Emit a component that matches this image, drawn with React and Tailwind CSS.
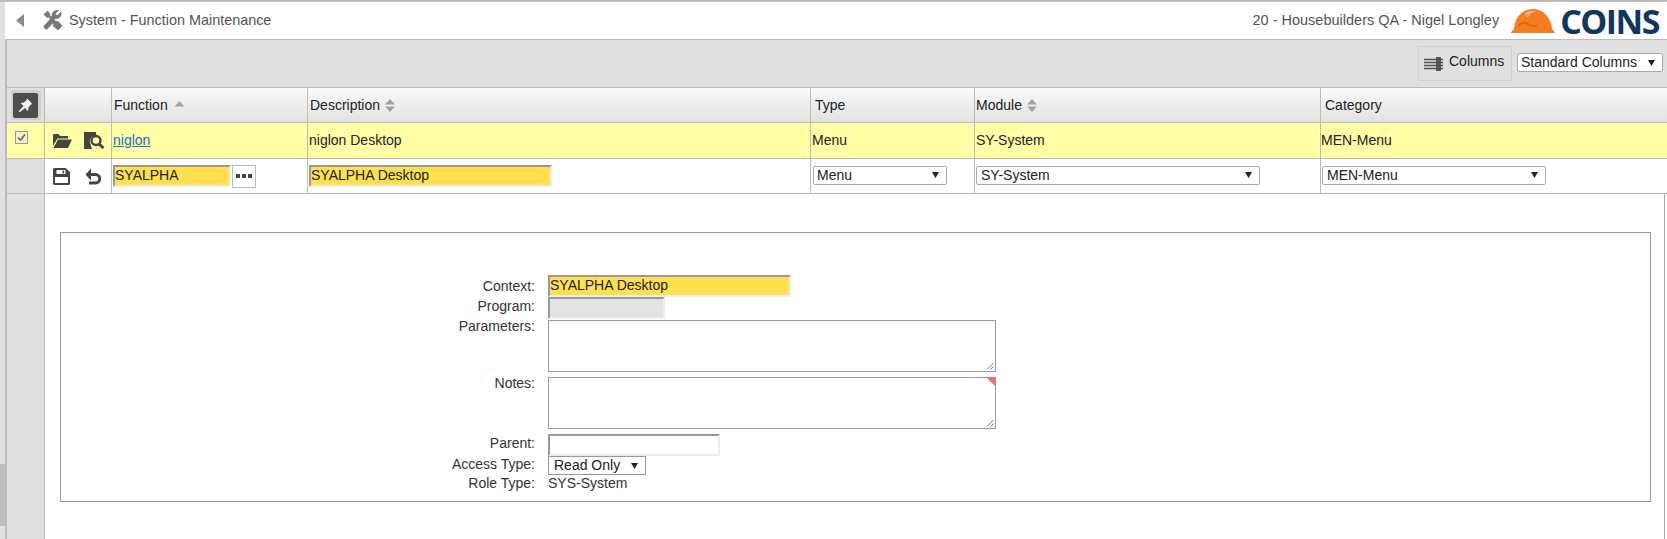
import React from "react";

const FONT = "font-['Liberation_Sans',Arial,sans-serif]";

const Caret = ({ className = "" }) => (
  <svg width="7" height="6" viewBox="0 0 7 6" className={className}>
    <path d="M0 0h7L3.500 6z" fill="#222" />
  </svg>
);

const SortBoth = () => (
  <svg width="10" height="13" viewBox="0 0 10 13" className="ml-[5px]">
    <path d="M5 0l5 5.500H0zM5 13L0 7.500h10z" fill="#a3a3a3" />
  </svg>
);

const SortUp = () => (
  <svg width="11" height="6" viewBox="0 0 11 6" className="ml-[6px] mb-[2px]">
    <path d="M5.500 0l5 5.500H.5z" fill="#a3a3a3" />
  </svg>
);

const FakeSelect = ({ text, className = "" }) => (
  <div
    className={`h-[19px] flex items-center justify-between bg-white border border-[#aaa] rounded-[2px] pr-[7px] text-[14px] text-[#222] ${className}`}
  >
    <span>{text}</span>
    <Caret />
  </div>
);

const Inset = ({ bg = "bg-white", className = "", children }) => (
  <div
    className={`h-[22px] border-2 border-t-[#999] border-l-[#999] border-r-[#eee] border-b-[#eee] text-[14px] leading-[17px] text-[#222] whitespace-nowrap overflow-hidden ${bg} ${className}`}
  >
    {children}
  </div>
);

const Label = ({ children, className = "" }) => (
  <div className={`w-[115px] text-right text-[14px] leading-[15px] text-[#333] ${className}`}>
    {children}
  </div>
);

const Resize = () => (
  <svg width="8" height="8" viewBox="0 0 8 8" className="absolute right-[1px] bottom-[1px]">
    <path d="M1 7.500L7.500 1M4.500 7.500L7.500 4.500" stroke="#777" strokeWidth="1" fill="none" />
  </svg>
);

const ToolsIcon = () => (
  <svg width="20" height="20" viewBox="0 0 20 20" fill="#777" stroke="#777" strokeWidth="0.8">
    <path d="M4.500 1L1 4.500l3 3 1.500-.5 2 2-6 6.500a1.800 1.800 0 000 2.500l.6.6a1.800 1.800 0 002.500 0l5-5.600 1.200 1.200-.7 1.300 4 4a1 1 0 001.400 0l3-3a1 1 0 000-1.400l-4-4-1.300.7-2-2 1.300-1.300a4.800 4.800 0 005.300-6.300L14.500 5.500 12.700 5l-.5-1.800L15.500.7a4.800 4.800 0 00-6.300 5.300L8.300 7 6.500 5.300 7 4z" />
  </svg>
);

const PinIcon = () => (
  <svg width="17" height="17" viewBox="0 0 17 17" fill="#f4f4f4">
    <path d="M10 1.500l5.500 5.500-1.500.5-2.500 3-.5 3.500-3-3L3 15l-1 0 0-1 4.500-5-3-3L7 5.500l2.500-2.500z" />
  </svg>
);

const FolderIcon = () => (
  <svg width="19" height="14" viewBox="0 0 19 14" fill="#444">
    <path d="M0 1a1 1 0 011-1h4.500l1.500 2h7a1 1 0 011 1v1.500H4.500L0 11.500z" />
    <path d="M5 5.500h14l-4 8.500H.5z" />
  </svg>
);

const SearchPageIcon = () => (
  <svg width="21" height="17" viewBox="0 0 21 17">
    <path d="M0 0h12v3a6.500 6.500 0 00-5.500 9.500L8 17H0z" fill="#444" />
    <circle cx="12" cy="8.500" r="4.500" fill="none" stroke="#444" strokeWidth="2.400" />
    <path d="M15 12l4.500 4" stroke="#444" strokeWidth="3" />
  </svg>
);

const SaveIcon = () => (
  <svg width="17" height="17" viewBox="0 0 17 17">
    <path d="M1.500 0h11L17 4v11.500a1.500 1.500 0 01-1.500 1.500h-14A1.500 1.500 0 010 15.500v-14A1.500 1.500 0 011.500 0z" fill="#444" />
    <rect x="3.500" y="2" width="9" height="4" fill="#fff" />
    <rect x="2" y="9" width="13" height="6" fill="#fff" />
    <rect x="9.500" y="2.600" width="1.600" height="2.800" fill="#444" />
  </svg>
);

const UndoIcon = () => (
  <svg width="17" height="17" viewBox="0 0 17 17" fill="none" stroke="#444" strokeWidth="3">
    <path d="M4 6.500h6.500a4 4 0 010 8.500H4" />
    <path d="M6 0.500L0.500 6.500 6 12.500z" fill="#444" stroke="none" />
  </svg>
);

const ColumnsIcon = () => (
  <svg width="19" height="14" viewBox="0 0 19 14">
    <path d="M0 2.500h19M0 5.500h19M0 8.500h19M0 11.500h19" stroke="#555" strokeWidth="1.600" />
    <rect x="12" y="0" width="5" height="14" fill="#555" />
  </svg>
);

// hard hat plus wordmark, the wordmark stays real text
const CoinsLogo = () => (
  <div className="flex items-center mr-[8px]">
    <svg width="44" height="26" viewBox="0 0 44 26">
      <path d="M0 25c.5-2 1.500-3 3-3.500C3.500 10 11 1 22 1s18 9 19 20.500c1.500.5 2.500 1.500 3 3.500z" fill="#f47b20" />
      <path d="M14 5c3-2 7-2.500 11-1.500-3 1-7 2.500-8 6-1.500 0-3-2-3-4.500z" fill="#fbb27a" />
      <path d="M7 18c3-3 7-4 10-2s6 3 9 1" stroke="#d9620e" strokeWidth="1.500" fill="none" />
    </svg>
    <span className="ml-[5px] uppercase font-['Open_Sans',sans-serif] font-bold text-[34px] leading-[36px] tracking-[-1.500px] text-[#12375f]">
      coins
    </span>
  </div>
);

const cols = {
  pin: "w-[38px]",
  act: "w-[67px]",
  fn: "w-[196px]",
  desc: "w-[503px]",
  type: "w-[164px]",
  mod: "w-[346px]",
};

const Row = ({ className = "", first, cells }) => (
  <div className={`flex border-b border-[#bbb] ${className}`}>
    {first}
    {cells}
  </div>
);

export default function App() {
  const cell = "border-r border-[#bbb] flex items-center shrink-0";
  return (
    <div className={`w-[1667px] h-[539px] overflow-hidden bg-white flex border-t-2 border-[#bbb] ${FONT}`}>
      <div className="w-[5px] shrink-0 bg-[#e0e0e0] flex flex-col">
        <div className="mt-[462px] h-[62px] bg-[#bdbdbd]" />
      </div>
      <div className="flex-1 min-w-0 flex flex-col">
        <div className="h-[38px] shrink-0 flex items-center justify-between border-b border-[#bbb] pl-[11px]">
          <div className="flex items-center">
            <svg width="9" height="13" viewBox="0 0 9 13">
              <path d="M8 0v13L0 6.500z" fill="#8a8a8a" />
            </svg>
            <span className="ml-[18px]"><ToolsIcon /></span>
            <span className="ml-[6px] text-[14.4px] text-[#555]">System - Function Maintenance</span>
          </div>
          <div className="flex items-center">
            <span className="text-[14.5px] text-[#555] mr-[12px]">20 - Housebuilders QA - Nigel Longley</span>
            <CoinsLogo />
          </div>
        </div>

        <div className="flex-1 min-h-0 flex flex-col border-l-2 border-[#bbb]">
          <div className="h-[48px] shrink-0 bg-[#e0e0e0] border-b border-[#bbb] flex justify-end items-start pt-[6px] pr-[4px]">
            <div className="h-[35px] w-[94px] flex items-center border border-[#d0d0d0] pl-[5px] text-[14px] text-[#222]">
              <ColumnsIcon />
              <span className="ml-[6px] -mt-[4px]">Columns</span>
            </div>
            <FakeSelect text="Standard Columns" className="w-[146px] ml-[5px] mt-[7px] pl-[3px]" />
          </div>

          <Row
            className="h-[35px] bg-gradient-to-b from-[#fafafa] to-[#e2e2e2] text-[14px] text-[#222]"
            first={
              <div className={`${cols.pin} ${cell} justify-center bg-[#e0e0e0]`}>
                <div className="w-[30px] h-[30px] rounded-[2px] bg-[#d0d0d0] flex items-center justify-center">
                  <div className="w-[25px] h-[25px] rounded-[2px] bg-[#4d4d4d] flex items-center justify-center">
                    <PinIcon />
                  </div>
                </div>
              </div>
            }
            cells={
              <>
                <div className={`${cols.act} ${cell}`} />
                <div className={`${cols.fn} ${cell} pl-[2px]`}>Function<SortUp /></div>
                <div className={`${cols.desc} ${cell} pl-[2px]`}>Description<SortBoth /></div>
                <div className={`${cols.type} ${cell} pl-[4px]`}>Type</div>
                <div className={`${cols.mod} ${cell} pl-[1px]`}>Module<SortBoth /></div>
                <div className="flex items-center pl-[4px]">Category</div>
              </>
            }
          />
          <Row
            className="h-[36px] bg-[#ffffa6] text-[14px] text-[#222]"
            first={
              <div className={`${cols.pin} ${cell} pl-[8px] pb-[6px]`}>
                <div className="w-[13px] h-[13px] border border-[#999] bg-[#f0f0d0] flex items-center justify-center">
                  <svg width="9" height="9" viewBox="0 0 9 9">
                    <path d="M1 4.500l2.500 2.500L8 1.500" stroke="#666" strokeWidth="1.600" fill="none" />
                  </svg>
                </div>
              </div>
            }
            cells={
              <>
                <div className={`${cols.act} ${cell} pl-[8px] gap-[12px]`}>
                  <FolderIcon />
                  <SearchPageIcon />
                </div>
                <div className={`${cols.fn} ${cell} pl-[1px]`}>
                  <a href="#" className="text-[#1a6fc4] underline">niglon</a>
                </div>
                <div className={`${cols.desc} ${cell} pl-[1px]`}>niglon Desktop</div>
                <div className={`${cols.type} ${cell} pl-[1px]`}>Menu</div>
                <div className={`${cols.mod} ${cell} pl-[1px]`}>SY-System</div>
                <div className="flex items-center">MEN-Menu</div>
              </>
            }
          />
          <Row
            className="h-[35px] bg-white"
            first={<div className={`${cols.pin} ${cell} bg-[#e0e0e0]`} />}
            cells={
              <>
                <div className={`${cols.act} ${cell} pl-[8px] gap-[15px]`}>
                  <SaveIcon />
                  <UndoIcon />
                </div>
                <div className={`${cols.fn} ${cell} pl-[1px]`}>
                  <Inset bg="bg-[#ffe04d]" className="w-[118px]">SYALPHA</Inset>
                  <div className="w-[24px] h-[23px] ml-[1px] border border-[#bbb] bg-white flex items-center justify-center gap-[2px]">
                    <span className="w-[4px] h-[4px] bg-[#444]" />
                    <span className="w-[4px] h-[4px] bg-[#444]" />
                    <span className="w-[4px] h-[4px] bg-[#444]" />
                  </div>
                </div>
                <div className={`${cols.desc} ${cell} pl-[1px]`}>
                  <Inset bg="bg-[#ffe04d]" className="w-[243px]">SYALPHA Desktop</Inset>
                </div>
                <div className={`${cols.type} ${cell} pl-[2px]`}>
                  <FakeSelect text="Menu" className="w-[134px] pl-[3px] mb-[2px]" />
                </div>
                <div className={`${cols.mod} ${cell} pl-[1px]`}>
                  <FakeSelect text="SY-System" className="w-[284px] pl-[4px] mb-[2px]" />
                </div>
                <div className="flex items-center pl-[1px]">
                  <FakeSelect text="MEN-Menu" className="w-[224px] pl-[4px] mb-[2px]" />
                </div>
              </>
            }
          />

          <div className="flex-1 flex min-h-0">
            <div className={`${cols.pin} shrink-0 bg-[#e0e0e0] border-r border-[#bbb]`} />
            <div className="flex-1 min-w-0 mr-[2px] border-r border-[#aaa] pt-[38px] pl-[15px] pr-[13px]">
              <div className="h-[270px] border border-[#999] pt-[42px] pl-[359px]">
                <div className="flex items-center h-[22px]">
                  <Label>Context:</Label>
                  <Inset bg="bg-[#ffe04d]" className="ml-[13px] w-[243px]">SYALPHA Desktop</Inset>
                </div>
                <div className="flex items-center h-[22px]">
                  <Label className="-mt-[4px]">Program:</Label>
                  <Inset bg="bg-[#e3e3e3]" className="ml-[13px] w-[117px]" />
                </div>
                <div className="flex items-start mt-[1px]">
                  <Label className="-mt-[1px]">Parameters:</Label>
                  <div className="relative ml-[13px] w-[448px] h-[52px] border border-[#999] bg-white">
                    <Resize />
                  </div>
                </div>
                <div className="flex items-start mt-[5px]">
                  <Label className="-mt-[1px]">Notes:</Label>
                  <div className="relative ml-[13px] w-[448px] h-[52px] border border-[#999] bg-white">
                    <div className="absolute top-0 right-0 w-0 h-0 border-t-[8px] border-l-[8px] border-t-[#ff6b6b] border-l-transparent" />
                    <Resize />
                  </div>
                </div>
                <div className="flex items-center mt-[5px] h-[22px]">
                  <Label className="-mt-[4px]">Parent:</Label>
                  <Inset className="ml-[13px] w-[172px]" />
                </div>
                <div className="flex items-center h-[19px]">
                  <Label className="-mt-[3px]">Access Type:</Label>
                  <div className="ml-[13px] w-[98px] h-[19px] flex items-center justify-between border border-[#999] pl-[5px] pr-[7px] text-[14px] text-[#222]">
                    <span>Read Only</span>
                    <Caret />
                  </div>
                </div>
                <div className="flex items-center h-[16px]">
                  <Label>Role Type:</Label>
                  <span className="ml-[13px] text-[14px] text-[#333]">SYS-System</span>
                </div>
              </div>
            </div>
          </div>
        </div>
      </div>
    </div>
  );
}
